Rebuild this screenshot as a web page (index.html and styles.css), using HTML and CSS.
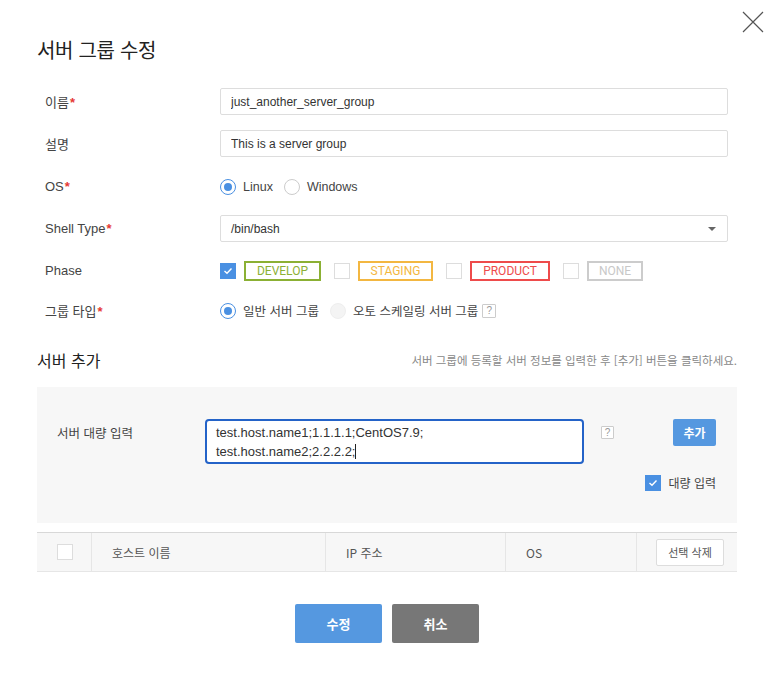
FILE: index.html
```html
<!DOCTYPE html>
<html lang="ko">
<head>
<meta charset="utf-8">
<title>서버 그룹 수정</title>
<link rel="stylesheet" href="styles.css">
</head>
<body>
<div class="modal">
  <button class="close" aria-label="닫기">
    <svg width="22" height="22" viewBox="0 0 22 22"><path d="M1 1L21 21M21 1L1 21" stroke="#555" stroke-width="1.2" fill="none"/></svg>
  </button>
  <h1 class="title">서버 그룹 수정</h1>

  <div class="form">
    <div class="row">
      <div class="label">이름<span class="req">*</span></div>
      <div class="field"><input class="input" type="text" value="just_another_server_group"></div>
    </div>
    <div class="row">
      <div class="label">설명</div>
      <div class="field"><input class="input" type="text" value="This is a server group"></div>
    </div>
    <div class="row">
      <div class="label">OS<span class="req">*</span></div>
      <div class="field opts">
        <span class="radio on"></span><span class="opt-text">Linux</span>
        <span class="radio"></span><span class="opt-text">Windows</span>
      </div>
    </div>
    <div class="row">
      <div class="label">Shell Type<span class="req">*</span></div>
      <div class="field">
        <div class="select">/bin/bash<span class="caret"></span></div>
      </div>
    </div>
    <div class="row">
      <div class="label">Phase</div>
      <div class="field phases">
        <span class="check on"><svg width="10" height="8" viewBox="0 0 10 8"><path d="M1.5 4L4 6.3L8.5 1.5" stroke="#fff" stroke-width="1.4" fill="none"/></svg></span>
        <span class="tag develop">DEVELOP</span>
        <span class="check"></span>
        <span class="tag staging">STAGING</span>
        <span class="check"></span>
        <span class="tag product">PRODUCT</span>
        <span class="check"></span>
        <span class="tag none">NONE</span>
      </div>
    </div>
    <div class="row">
      <div class="label">그룹 타입<span class="req">*</span></div>
      <div class="field opts">
        <span class="radio on"></span><span class="opt-text">일반 서버 그룹</span>
        <span class="radio disabled"></span><span class="opt-text">오토 스케일링 서버 그룹</span><span class="help">?</span>
      </div>
    </div>
  </div>

  <div class="section-head">
    <h2 class="section-title">서버 추가</h2>
    <p class="hint">서버 그룹에 등록할 서버 정보를 입력한 후 [추가] 버튼을 클릭하세요.</p>
  </div>

  <div class="panel">
    <div class="panel-row">
      <div class="panel-label">서버 대량 입력</div>
      <div class="textarea">test.host.name1;1.1.1.1;CentOS7.9;<br>test.host.name2;2.2.2.2;<span class="cursor"></span></div>
      <span class="help help-panel">?</span>
      <button class="btn-add">추가</button>
    </div>
    <div class="bulk">
      <span class="check on"><svg width="10" height="8" viewBox="0 0 10 8"><path d="M1.5 4L4 6.3L8.5 1.5" stroke="#fff" stroke-width="1.4" fill="none"/></svg></span>
      <span class="bulk-text">대량 입력</span>
    </div>
  </div>

  <div class="table-head">
    <div class="cell c-check"><span class="check white"></span></div>
    <div class="cell c-host">호스트 이름</div>
    <div class="cell c-ip">IP 주소</div>
    <div class="cell c-os">OS</div>
    <div class="cell c-act"><button class="btn-del">선택 삭제</button></div>
  </div>

  <div class="footer">
    <button class="btn primary">수정</button>
    <button class="btn secondary">취소</button>
  </div>
</div>
</body>
</html>
```

FILE: styles.css
```css
* { box-sizing: border-box; }
html, body { margin: 0; padding: 0; background: #fff; }
body {
  font-family: "Liberation Sans", "Noto Sans CJK KR", sans-serif;
  color: #333;
  width: 774px;
  height: 675px;
  overflow: hidden;
}
.modal {
  position: relative;
  padding: 37px 37px 0 37px;
}
.close {
  position: absolute;
  top: 11px;
  left: 742px;
  width: 22px;
  height: 22px;
  padding: 0;
  border: 0;
  background: none;
}
.close svg { display: block; }
.title {
  margin: 0;
  font-family: "Noto Sans CJK KR", sans-serif;
  font-size: 20px;
  font-weight: 400;
  line-height: 26px;
  color: #222;
  letter-spacing: -0.3px;
}
.form {
  display: flex;
  flex-direction: column;
  gap: 15px;
  padding: 25px 9px 0 8px;
}
.row {
  display: flex;
  align-items: center;
  height: 27px;
}
.row:nth-child(3) { margin-top: 1px; }
.row:nth-child(6) { margin-top: -2px; }
.label {
  width: 175px;
  font-size: 13px;
  color: #444;
  font-family: "Liberation Sans", "Noto Sans CJK KR", sans-serif;
}
.req { color: #e53935; font-weight: bold; margin-left: 1px; }
.field { flex: 1; display: flex; align-items: center; }
.input, .select {
  width: 100%;
  height: 27px;
  border: 1px solid #ddd;
  border-radius: 2px;
  padding: 0 10px;
  font-family: "Liberation Sans", "Noto Sans CJK KR", sans-serif;
  font-size: 12px;
  color: #333;
  background: #fff;
  outline: none;
}
.select {
  display: flex;
  align-items: center;
  justify-content: space-between;
}
.caret {
  width: 0; height: 0;
  border-left: 4px solid transparent;
  border-right: 4px solid transparent;
  border-top: 4px solid #666;
  margin-right: 1px;
}
.opts { gap: 0; }
.radio {
  width: 16px; height: 16px;
  border-radius: 50%;
  border: 1px solid #ccc;
  background: #fff;
  display: inline-block;
  position: relative;
  flex: none;
}
.radio.on { border-color: #4a90e2; }
.radio.on::after {
  content: "";
  position: absolute;
  left: 3px; top: 3px;
  width: 8px; height: 8px;
  border-radius: 50%;
  background: #4a90e2;
}
.radio.disabled { background: #f4f4f4; border-color: #eee; }
.opt-text {
  font-size: 12.5px;
  color: #444;
  margin: 0 11px 0 7px;
  font-family: "Liberation Sans", "Noto Sans CJK KR", sans-serif;
}
.opt-text + .help { margin-left: -7px; }
.help {
  display: inline-flex;
  align-items: center;
  justify-content: center;
  width: 14px; height: 14px;
  border: 1px solid #ccc;
  border-radius: 1px;
  font-size: 10px;
  color: #999;
  background: #fff;
  flex: none;
}
.phases { gap: 0; }
.check {
  width: 16px; height: 16px;
  border: 1px solid #ddd;
  background: #fff;
  display: inline-flex;
  align-items: center;
  justify-content: center;
  flex: none;
}
.check.on { background: #4a90e2; border-color: #4a90e2; }
.tag {
  display: inline-flex;
  align-items: center;
  justify-content: center;
  height: 20px;
  padding: 0 9px;
  border: 2px solid;
  font-family: Roboto, sans-serif;
  font-size: 12px;
  margin: 0 13px 0 8px;
}
.tag.develop { color: #8bb034; border-color: #8bb034; width: 77px; }
.tag.staging { color: #f3b741; border-color: #f3b741; width: 75px; }
.tag.product { color: #ee4b4b; border-color: #ee4b4b; width: 80px; }
.tag.none { color: #c8c8c8; border-color: #cccccc; width: 56px; margin-right: 0; }

.section-head {
  display: flex;
  justify-content: space-between;
  align-items: center;
  margin-top: 23px;
  height: 26px;
}
.section-title {
  margin: 0;
  font-family: "Noto Sans CJK KR", sans-serif;
  font-size: 16px;
  font-weight: 400;
  color: #222;
}
.hint {
  margin: 0;
  font-family: "Noto Sans CJK KR", sans-serif;
  font-size: 11.5px;
  color: #888;
  letter-spacing: 0;
}
.panel {
  margin-top: 14px;
  background: #f7f7f7;
  height: 136px;
  padding: 32px 21px 0 20px;
}
.panel-row {
  display: flex;
  align-items: flex-start;
}
.panel-label {
  width: 148px;
  padding-top: 4px;
  font-family: "Noto Sans CJK KR", sans-serif;
  font-size: 12.5px;
  color: #444;
}
.textarea {
  width: 379px;
  height: 45px;
  border: 2px solid #2463c8;
  border-radius: 4px;
  background: #fff;
  padding: 2px 9px;
  font-family: "Liberation Sans", sans-serif;
  font-size: 13px;
  line-height: 19px;
  color: #333;
}
.cursor {
  display: inline-block;
  width: 1px;
  height: 15px;
  background: #222;
  vertical-align: -3px;
}
.help-panel {
  margin-left: 17px;
  margin-top: 7px;
  width: 13px;
  height: 13px;
}
.btn-add {
  margin-left: auto;
  width: 43px;
  height: 27px;
  border: 0;
  border-radius: 2px;
  background: #5598e0;
  color: #fff;
  font-family: "Noto Sans CJK KR", sans-serif;
  font-size: 12px;
  font-weight: 700;
  padding: 0;
}
.bulk {
  display: flex;
  justify-content: flex-end;
  align-items: center;
  margin-top: 10px;
  gap: 7px;
}
.bulk-text {
  font-family: "Noto Sans CJK KR", sans-serif;
  font-size: 12px;
  color: #444;
}
.table-head {
  display: flex;
  margin-top: 9px;
  height: 40px;
  background: #f7f7f7;
  border-top: 1px solid #d8d8d8;
  border-bottom: 1px solid #e6e6e6;
}
.cell {
  display: flex;
  align-items: center;
  padding-left: 20px;
  font-family: "Noto Sans CJK KR", sans-serif;
  font-size: 12px;
  color: #555;
  border-right: 1px solid #e6e6e6;
}
.c-check { width: 55px; }
.c-host { width: 234px; }
.c-ip { width: 180px; }
.c-os { width: 131px; }
.c-act { flex: 1; border-right: 0; padding-left: 19px; }
.check.white { border-color: #ddd; }
.btn-del {
  height: 27px;
  width: 68px;
  border: 1px solid #ddd;
  border-radius: 2px;
  background: #fff;
  font-family: "Noto Sans CJK KR", sans-serif;
  font-size: 11px;
  color: #555;
  padding: 0;
}
.footer {
  display: flex;
  justify-content: center;
  gap: 10px;
  margin-top: 32px;
}
.btn {
  width: 87px;
  height: 39px;
  border: 0;
  border-radius: 2px;
  color: #fff;
  font-family: "Noto Sans CJK KR", sans-serif;
  font-size: 13px;
  font-weight: 700;
}
.btn.primary { background: #5598e0; }
.btn.secondary { background: #777; }
```
